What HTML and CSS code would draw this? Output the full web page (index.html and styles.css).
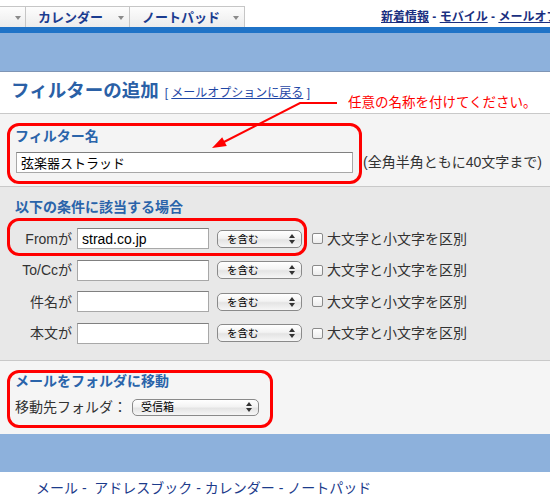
FILE: index.html
```html
<!DOCTYPE html>
<html lang="ja">
<head>
<meta charset="utf-8">
<title>フィルターの追加</title>
<link rel="stylesheet" href="styles.css">
</head>
<body>
<div class="page">
  <header class="topbar">
    <nav class="tabs">
      <div class="tab tab-cut"><span class="caret"></span></div>
      <div class="tab tab-cal"><span class="tab-label">カレンダー</span><span class="caret"></span></div>
      <div class="tab tab-note"><span class="tab-label">ノートパッド</span><span class="caret"></span></div>
    </nav>
    <div class="toplinks"><a href="#">新着情報</a> - <a href="#">モバイル</a> - <a href="#">メールオプション</a> - <a href="#">ヘルプ</a></div>
  </header>
  <div class="band-dark"></div>
  <div class="band-light"></div>

  <div class="title-row">
    <h1 class="title">フィルターの追加</h1>
    <span class="back">[ <a href="#">メールオプションに戻る</a> ]</span>
  </div>

  <section class="sec sec-name">
    <div class="redbox name-box">
      <div class="sec-heading">フィルター名</div>
      <input class="field field-name" type="text" value="弦楽器ストラッド">
    </div>
    <span class="note">(全角半角ともに40文字まで)</span>
  </section>

  <section class="sec sec-cond">
    <div class="sec-heading">以下の条件に該当する場合</div>
    <div class="cond-rows">
      <div class="cond-row">
        <div class="cond-group marked">
          <span class="cond-label">Fromが</span>
          <input class="field field-cond" type="text" value="strad.co.jp">
          <span class="popup popup-cond"><span class="popup-text">を含む</span><svg class="updown" viewBox="0 0 6 10" width="6" height="10"><path d="M0 4L3 0L6 4Z M0 6L3 10L6 6Z"/></svg></span>
        </div>
        <span class="check"></span><span class="check-text">大文字と小文字を区別</span>
      </div>
      <div class="cond-row">
        <div class="cond-group">
          <span class="cond-label">To/Ccが</span>
          <input class="field field-cond" type="text" value="">
          <span class="popup popup-cond"><span class="popup-text">を含む</span><svg class="updown" viewBox="0 0 6 10" width="6" height="10"><path d="M0 4L3 0L6 4Z M0 6L3 10L6 6Z"/></svg></span>
        </div>
        <span class="check"></span><span class="check-text">大文字と小文字を区別</span>
      </div>
      <div class="cond-row">
        <div class="cond-group">
          <span class="cond-label">件名が</span>
          <input class="field field-cond" type="text" value="">
          <span class="popup popup-cond"><span class="popup-text">を含む</span><svg class="updown" viewBox="0 0 6 10" width="6" height="10"><path d="M0 4L3 0L6 4Z M0 6L3 10L6 6Z"/></svg></span>
        </div>
        <span class="check"></span><span class="check-text">大文字と小文字を区別</span>
      </div>
      <div class="cond-row">
        <div class="cond-group">
          <span class="cond-label">本文が</span>
          <input class="field field-cond" type="text" value="">
          <span class="popup popup-cond"><span class="popup-text">を含む</span><svg class="updown" viewBox="0 0 6 10" width="6" height="10"><path d="M0 4L3 0L6 4Z M0 6L3 10L6 6Z"/></svg></span>
        </div>
        <span class="check"></span><span class="check-text">大文字と小文字を区別</span>
      </div>
    </div>
  </section>

  <section class="sec sec-move">
    <div class="redbox move-box">
      <div class="sec-heading move-heading">メールをフォルダに移動</div>
      <div class="move-row">
        <span class="move-label">移動先フォルダ：</span>
        <span class="popup popup-folder"><span class="popup-text">受信箱</span><svg class="updown" viewBox="0 0 6 10" width="6" height="10"><path d="M0 4L3 0L6 4Z M0 6L3 10L6 6Z"/></svg></span>
      </div>
    </div>
  </section>

  <div class="band-foot"></div>
  <footer class="footer">メール -&nbsp; アドレスブック - カレンダー - ノートパッド</footer>

  <div class="annot-text">任意の名称を付けてください。</div>
  <svg class="annot-arrow" width="550" height="200" viewBox="0 0 550 200">
    <polyline points="337,103 300,103 220,144" fill="none" stroke="#f00" stroke-width="2"/>
    <polygon points="212,148 226.8,146 222.2,137.2" fill="#f00"/>
  </svg>
</div>
</body>
</html>
```

FILE: styles.css
```css
body {
  margin: 0;
  background: #fff;
  font-family: "Liberation Sans", "Noto Sans CJK JP", sans-serif;
  color: #333;
}

.page {
  position: relative;
  width: 550px;
  height: 500px;
  overflow: hidden;
}

/* ---------- top bar ---------- */
.topbar {
  display: flex;
  height: 27px;
  overflow: hidden;
}

.tabs {
  display: flex;
  align-self: flex-end;
  height: 21px;
  flex-shrink: 0;
}

.tab {
  box-sizing: border-box;
  height: 21px;
  display: flex;
  align-items: center;
  border-top: 1px solid #c6c6c6;
  border-left: 1px solid #c6c6c6;
  background: linear-gradient(#fdfdfd, #ececec);
  padding: 2px 5px 0 12px;
}

.tab-cut {
  width: 25px;
  border-left: none;
  padding: 2px 4px 0 0;
}

.tab-cal {
  width: 104px;
}

.tab-note {
  width: 116px;
  border-right: 1px solid #c6c6c6;
}

.tab-label {
  font-size: 13px;
  font-weight: bold;
  line-height: 16px;
  color: #1b3c90;
}

.caret {
  width: 0;
  height: 0;
  margin-left: auto;
  border-left: 3.5px solid transparent;
  border-right: 3.5px solid transparent;
  border-top: 4px solid #8a8a8a;
}

.toplinks {
  margin-left: 136px;
  padding-top: 9px;
  flex-shrink: 0;
  white-space: nowrap;
  font-size: 12px;
  font-weight: bold;
  line-height: 17px;
  color: #1a2f80;
}

.toplinks a {
  color: #1a2f80;
  text-decoration: underline;
}

.band-dark {
  height: 6px;
  background: #1f73c7;
}

.band-light {
  height: 38px;
  background: #8db1dc;
  border-bottom: 1px solid #7f95b5;
}

/* ---------- title ---------- */
.title-row {
  display: flex;
  align-items: baseline;
  height: 24px;
  padding: 7px 0 10px 11px;
}

.title {
  margin: 0;
  font-size: 18.5px;
  font-weight: bold;
  line-height: 24px;
  color: #2a60a6;
}

.back {
  margin-left: 6px;
  font-size: 12px;
  line-height: 16px;
  color: #2b50a8;
}

.back a {
  color: #1f47a6;
  text-decoration: underline;
}

/* ---------- sections ---------- */
.sec {
  border-top: 1px solid #c9c9c9;
}

.sec-heading {
  font-size: 14px;
  font-weight: bold;
  line-height: 18px;
  color: #2a64aa;
}

.redbox {
  border: 3px solid #f00;
  border-radius: 12px;
}

.field {
  box-sizing: border-box;
  height: 21px;
  margin: 0;
  padding: 0 4px;
  border: 1px solid #a8a8a8;
  border-top-color: #808080;
  background: #fff;
  color: #000;
  font-family: "Liberation Sans", "Noto Sans CJK JP", sans-serif;
  outline: none;
}

.sec-name {
  display: flex;
  align-items: flex-end;
  background: #f4f4f4;
  padding: 9px 0 2px 7px;
}

.name-box {
  padding: 1px 6px 8px 5px;
}

.field-name {
  display: block;
  width: 337px;
  margin: 7px 0 0 1px;
  font-size: 13px;
}

.note {
  margin: 0 0 11px 1px;
  font-size: 14px;
  line-height: 21px;
  white-space: nowrap;
  color: #333;
}

/* conditions */
.sec-cond {
  background: #e8e8e8;
  padding: 11px 0 11px 15px;
}

.cond-rows {
  margin-top: 7px;
}

.cond-row {
  display: flex;
  align-items: center;
  height: 31.5px;
}

.cond-group {
  position: relative;
  display: flex;
  align-items: center;
  height: 100%;
}

.cond-group.marked::after {
  content: "";
  position: absolute;
  top: -5px;
  bottom: -1.5px;
  left: -8px;
  right: -5px;
  border: 3px solid #f00;
  border-radius: 12px;
  pointer-events: none;
}

.cond-label {
  width: 57px;
  text-align: right;
  font-size: 14px;
  line-height: 20px;
  color: #333;
  white-space: nowrap;
}

.field-cond {
  width: 132px;
  margin-left: 5px;
  font-size: 14px;
}

.popup {
  box-sizing: border-box;
  display: flex;
  align-items: center;
  height: 18px;
  padding: 0 6px 0 9px;
  border: 1px solid #8a8a8a;
  border-radius: 5px;
  background: linear-gradient(#ffffff, #f3f3f3 45%, #e4e4e4 55%, #f6f6f6);
  color: #000;
}

.popup-text {
  font-size: 10.5px;
  line-height: 14px;
}

.updown {
  margin-left: auto;
  fill: #333;
}

.popup-cond {
  width: 85px;
  margin-left: 8px;
}

.check {
  box-sizing: border-box;
  width: 11px;
  height: 11px;
  margin-left: 10px;
  border: 1px solid #8a8a8a;
  border-radius: 2px;
  background: linear-gradient(#ffffff, #ececec);
}

.check-text {
  margin-left: 4px;
  font-size: 14px;
  line-height: 20px;
  color: #333;
  white-space: nowrap;
}

/* move */
.sec-move {
  display: flex;
  align-items: flex-start;
  background: #f5f5f5;
  padding: 9px 0 6px 7px;
}

.move-box {
  padding: 0 11px 8px 5px;
}

.move-heading {
  line-height: 16px;
}

.move-row {
  display: flex;
  align-items: center;
  height: 20px;
  margin-top: 8px;
}

.move-label {
  font-size: 14px;
  line-height: 20px;
  color: #333;
  white-space: nowrap;
}

.popup-folder {
  width: 127px;
  height: 17px;
  margin-left: 5px;
  padding-left: 8px;
}

.popup-folder .popup-text {
  font-size: 11px;
}

/* footer */
.band-foot {
  height: 38px;
  background: #8db1dc;
}

.footer {
  padding: 6px 0 0 36px;
  font-size: 14px;
  line-height: 20px;
  color: #1c3b8b;
  white-space: nowrap;
}

/* annotation overlay */
.annot-text {
  position: absolute;
  left: 348px;
  top: 94px;
  font-size: 13.5px;
  line-height: 18px;
  color: #f00;
  white-space: nowrap;
}

.annot-arrow {
  position: absolute;
  left: 0;
  top: 0;
  pointer-events: none;
}
```
